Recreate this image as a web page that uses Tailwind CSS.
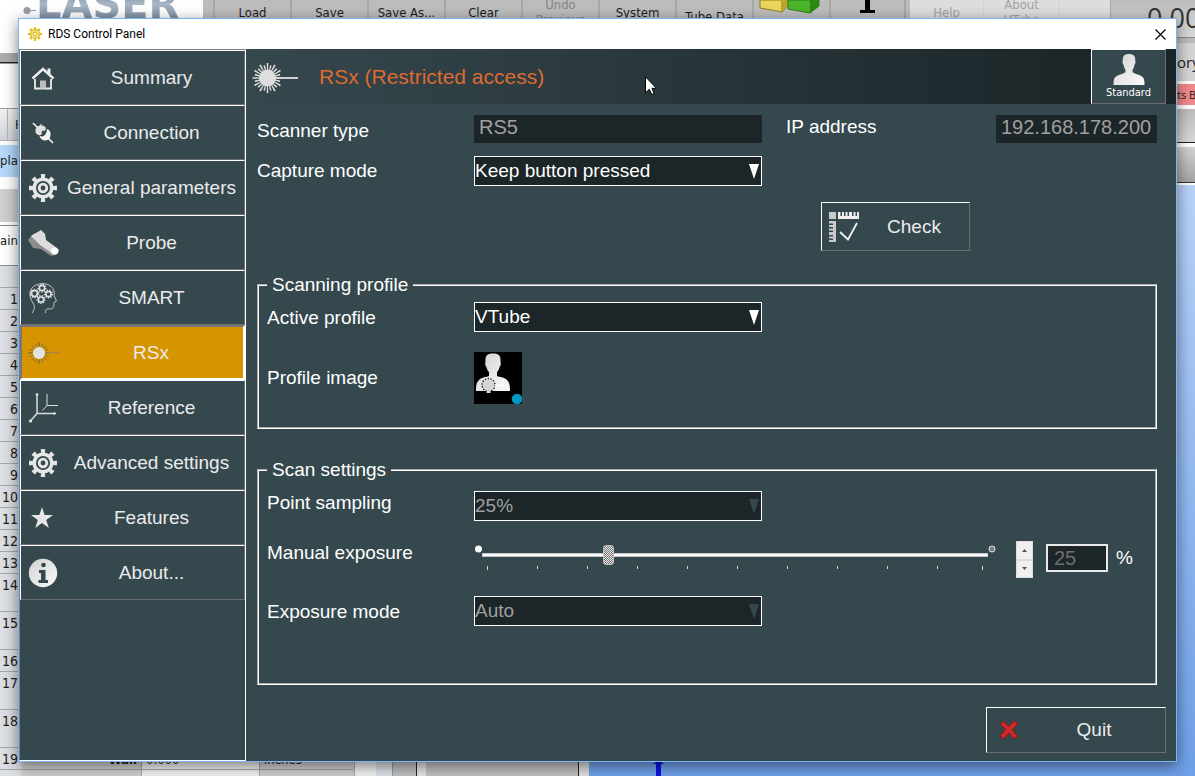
<!DOCTYPE html>
<html lang="en">
<head>
  <meta charset="UTF-8" />
  <meta name="viewport" content="width=device-width, initial-scale=1.0"/>
  <title>RDS Control Panel</title>
  <script src="https://cdn.jsdelivr.net/npm/@tailwindcss/browser@4"></script>
</head>
<body class="relative min-h-screen overflow-hidden bg-white font-['Liberation_Sans',Arial,sans-serif] text-[19px] leading-6 text-white">

  <!-- shared icon shapes -->
  <svg class="absolute w-0 h-0" aria-hidden="true">
    <defs>
      <linearGradient id="silver" x1="0" y1="0" x2="1" y2="1">
        <stop offset="0" stop-color="#d2d2d2"/><stop offset="1" stop-color="#fafafa"/>
      </linearGradient>
      <symbol id="gear" viewBox="0 0 32 32">
        <g fill="none" stroke="#e6e6e6">
          <circle cx="16" cy="16" r="8.800" stroke-width="3.600"/>
          <circle cx="16" cy="16" r="11.800" stroke-width="4.400" pathLength="16" stroke-dasharray="0.9 1.1" stroke-dashoffset="0.45"/>
          <circle cx="16" cy="16" r="3.800" stroke-width="2.800"/>
        </g>
      </symbol>
      <symbol id="person" viewBox="0 0 32 32">
        <path fill="url(#silver)" d="M16 1c4.500 0 6.500 2 6.200 6.500.6 1.500.2 3.500-.8 4.200-.3 2.500-1 3.800-1.800 5v2.600c2 1.600 6 2 9.400 4.200 2.200 1.500 2.500 4 2.500 8.500H.5c0-4.500.3-7 2.500-8.500 3.400-2.200 7.400-2.600 9.400-4.200v-2.600c-.8-1.200-1.500-2.500-1.800-5-1-.7-1.400-2.700-.8-4.200C9.500 3 11.500 1 16 1z"/>
      </symbol>
    </defs>
  </svg>

  <!-- application behind the dialog -->
  <div class="absolute inset-0 flex flex-col overflow-hidden font-['DejaVu_Sans_Condensed','DejaVu_Sans',sans-serif] text-[13px] leading-[15px] text-[#1c1c1c]" aria-hidden="true">
    <div class="flex h-[43px] shrink-0 bg-[#bdbdbd]">
      <div class="flex w-[203px] items-start overflow-hidden bg-white">
        <svg class="w-[36px] h-6 shrink-0" viewBox="0 0 36 24"><path d="M27 10.500h9" stroke="#7f9fd0"/><circle cx="27" cy="10.500" r="3.500" fill="#999ea4"/></svg>
        <div class="-mt-4 bg-linear-to-b from-[#5b6f86] via-[#a9b8c6] to-[#6f8296] bg-clip-text font-['DejaVu_Sans'] text-[40px] leading-[40px] font-bold text-transparent">LASER</div>
      </div>
      <div class="flex h-6 pl-[10px] text-center">
        <div class="flex w-[77px] items-center justify-center border-l-2 border-[#a8a8a8]">Load</div>
        <div class="flex w-[77px] items-center justify-center border-l-2 border-[#a8a8a8]">Save</div>
        <div class="flex w-[77px] items-center justify-center border-l-2 border-[#a8a8a8]">Save As...</div>
        <div class="flex w-[77px] items-center justify-center border-l-2 border-[#a8a8a8]">Clear</div>
        <div class="flex w-[77px] items-center justify-center border-l-2 border-[#a8a8a8] text-[#858585]">Undo<br>Previous</div>
        <div class="flex w-[77px] items-center justify-center border-l-2 border-[#a8a8a8]">System</div>
        <div class="flex w-[77px] items-end justify-center border-l-2 border-[#a8a8a8]">Tube Data</div>
        <div class="w-[77px] border-l-2 border-[#a8a8a8]">
          <svg class="w-[75px] h-4" viewBox="0 0 75 16">
            <path d="M6 0h28v5l-6 7-22-4z" fill="#ecd75c" stroke="#8d7a1a"/><path d="M27 12V0h7v5z" fill="#c2a726"/>
            <path d="M34 0h31v6l-9 7-22-4z" fill="#4bb52b" stroke="#2c7d14"/><path d="M56 13V0h9v6z" fill="#2b8a13"/>
          </svg>
        </div>
        <div class="w-[77px] border-x-2 border-[#a8a8a8]">
          <svg class="w-[73px] h-4" viewBox="0 0 73 16"><path d="M34 0h5v10h5v3H29v-3h5z" fill="#000"/></svg>
        </div>
      </div>
      <div class="ml-[4px] flex w-[201px] border-r border-[#aaa] bg-[#dedede] text-[#a3a3a3]">
        <div class="flex h-6 w-[73px] items-center justify-center">Help</div>
        <div class="flex h-6 w-[77px] items-center justify-center border-x border-[#d2d2d2] text-center">About<br>VTube</div>
      </div>
      <div class="h-[38px] flex-1 overflow-hidden border-b border-[#8a8a8a] bg-linear-to-b from-[#bcbcbc] to-[#dadada] pl-[36px] font-['Open_Sans'] text-[27px] leading-9 whitespace-nowrap text-[#333]">0.000</div>
    </div>

    <div class="flex min-h-0 flex-1">
      <!-- row headers of the data grid -->
      <div class="w-[21px] shrink-0 overflow-hidden">
        <div class="h-[10px] bg-white"></div>
        <div class="h-[10px] border-b border-[#222] bg-[#adadad]"></div>
        <div class="h-[46px] border-y border-[#999] bg-white"></div>
        <div class="flex h-8 items-center border-b border-[#b5b5b5] bg-linear-to-b from-[#f2f2f2] to-[#cfd3d8]"><span class="ml-[7px] border-l border-[#b5b5b5] pl-[7px] leading-8">H</span></div>
        <div class="mt-1 h-8 bg-[#b5d9fb] leading-8">play</div>
        <div class="mt-3 h-[33px] bg-[#d0d0d0]"></div>
        <div class="mt-[3px] h-10 border-t border-[#888] leading-[30px]">ain</div>
        <ol class="border-t border-[#8a8f9c] bg-[#dcdfe4] pt-[21px] text-right text-[14px] leading-[22px]">
          <li class="h-[22px] border-t border-[#a4a8ad] pr-[3px]">1</li>
          <li class="h-[22px] border-t border-[#a4a8ad] pr-[3px]">2</li>
          <li class="h-[22px] border-t border-[#a4a8ad] pr-[3px]">3</li>
          <li class="h-[22px] border-t border-[#a4a8ad] pr-[3px]">4</li>
          <li class="h-[22px] border-t border-[#a4a8ad] pr-[3px]">5</li>
          <li class="h-[22px] border-t border-[#a4a8ad] pr-[3px]">6</li>
          <li class="h-[22px] border-t border-[#a4a8ad] pr-[3px]">7</li>
          <li class="h-[22px] border-t border-[#a4a8ad] pr-[3px]">8</li>
          <li class="h-[22px] border-t border-[#a4a8ad] pr-[3px]">9</li>
          <li class="h-[22px] border-t border-[#a4a8ad] pr-[3px]">10</li>
          <li class="h-[22px] border-t border-[#a4a8ad] pr-[3px]">11</li>
          <li class="h-[22px] border-t border-[#a4a8ad] pr-[3px]">12</li>
          <li class="h-[22px] border-t border-[#a4a8ad] pr-[3px]">13</li>
          <li class="h-[38px] border-t border-[#a4a8ad] pr-[3px]">14</li>
          <li class="h-[38px] border-t border-[#a4a8ad] pr-[3px]">15</li>
          <li class="h-[22px] border-t border-[#a4a8ad] pr-[3px]">16</li>
          <li class="h-[38px] border-t border-[#a4a8ad] pr-[3px]">17</li>
          <li class="h-[38px] border-t border-[#a4a8ad] pr-[3px]">18</li>
          <li class="h-[22px] border-t border-[#a4a8ad] pr-[3px]">19</li>
          <li class="h-[22px] border-t border-[#a4a8ad]"></li>
        </ol>
      </div>
      <div class="flex w-[568px] shrink-0 items-end">
        <div class="flex h-[29px] w-full leading-[25px]">
          <div class="w-[121px] border-r border-[#a9a9a9] bg-[#d0d0d0]"><p class="h-[23px] border-b border-[#a9a9a9] pr-1 text-right font-bold">Wall</p></div>
          <div class="w-[118px] border-r border-[#a9a9a9] bg-[#f4f4f4]"><p class="h-[23px] border-b border-[#a9a9a9] pl-1">0.000</p></div>
          <div class="w-[95px] border-r border-[#a9a9a9] bg-[#d0d0d0]"><p class="h-[23px] border-b border-[#a9a9a9] pl-1">inches</p></div>
          <div class="w-[21px] bg-[#f2f2f2]"></div>
          <div class="w-[17px] border-r border-[#7f9cc0] bg-[#dce1e7]"></div>
          <div class="w-[24px] border-r border-[#222] bg-[#c0c0c0]"></div>
          <div class="w-[9px] bg-[#e4e4e4]"></div>
          <div class="w-[153px] border-r border-[#222] bg-[#c0c0c0]"></div>
          <div class="flex-1 bg-[#dedede]"></div>
        </div>
      </div>
      <div class="flex flex-1 flex-col overflow-hidden whitespace-nowrap">
        <div class="flex h-[38px] justify-end bg-[#d5d5d5]"><span class="w-[18px] font-['Open_Sans'] text-[15px] leading-[38px]">ory</span></div>
        <div class="mt-[3px] flex h-[21px] justify-end bg-[#f08a8a]"><span class="w-[18px] font-['Open_Sans'] text-[11px] leading-[21px]">ts Be</span></div>
        <div class="mt-1 h-[34px] border-b border-[#222] bg-linear-to-b from-[#bcbcbc] to-[#dadada]"></div>
        <div class="mt-1 h-[36px] border-b border-[#333] bg-linear-to-b from-[#d2d2d2] to-[#a4a4a4]"></div>
        <div class="mt-0.5 flex flex-1 items-end bg-linear-to-b from-[#b9d2f8] to-[#6ea0e8]">
          <svg class="ml-16 h-4 w-[12px]" viewBox="0 0 12 16"><path d="M5.500 0L11 4H8v12H3V4H0z" fill="#0b12e8"/></svg>
        </div>
      </div>
    </div>
  </div>

  <!-- dialog -->
  <div class="relative mx-[18px] mt-[18px] border border-[#7ab6f5] bg-[#35484e] shadow-[0_4px_14px_rgba(0,0,0,0.5)]">
    <div class="flex h-[30px] items-center bg-white pl-[9px] font-[Roboto,sans-serif] text-[12px] text-black">
      <svg class="mr-[6px] h-[14px] w-[14px]" viewBox="0 0 14 14" fill="none" stroke="#dfb90c">
        <circle cx="7" cy="7" r="4.300" stroke-width="1.500"/>
        <circle cx="7" cy="7" r="5.800" stroke-width="2.200" pathLength="16" stroke-dasharray="0.9 1.1" stroke-dashoffset="0.45"/>
        <circle cx="7" cy="7" r="2" stroke-width="1.300"/>
      </svg>
      <h1 class="flex-1">RDS Control Panel</h1>
      <button type="button" aria-label="Close" class="flex h-full w-[31px] items-center justify-center">
        <svg class="h-[11px] w-[11px]" viewBox="0 0 11 11" stroke="#000" stroke-width="1.200"><path d="M.5.500l10 10M10.500.500l-10 10"/></svg>
      </button>
    </div>

    <div class="flex">
      <nav class="flex w-[227px] shrink-0 flex-col border border-t-[#808080] border-r-white border-b-white border-l-[#808080] text-[#ebebeb]">
        <button type="button" class="flex h-[55px] items-center border border-t-white border-r-[#6d6d6d] border-b-[#6d6d6d] border-l-white pl-[6px]">
          <svg class="h-8 w-8" viewBox="0 0 32 32"><path d="M5.500 16.500L16 7l10.500 9.500" fill="none" stroke="#ececec" stroke-width="2.500"/><path d="M20.500 6.500h3v6l-3-2.500z" fill="#ececec"/><path d="M8 17v9.500h16V17" fill="none" stroke="#ececec" stroke-width="1.800"/><path d="M13 18.500h6v8h-6z" fill="#bdbdbd"/></svg>
          <span class="flex-1">Summary</span>
        </button>
        <button type="button" class="flex h-[55px] items-center border border-t-white border-r-[#6d6d6d] border-b-[#6d6d6d] border-l-white pl-[6px]">
          <svg class="h-8 w-8" viewBox="0 0 32 32"><path d="M6 6l5 5M20 20l6 6" stroke="#f0f0f0" stroke-width="1.600"/><path d="M8.500 15c-.5-3.500 1.500-6 4.500-6.500l1-2 1 2c2 .2 3.200 1 4 2.500l-1 3-2-.5-1.500 1.500.5 2-2.500 1.500-2-1c-1-.5-1.700-1.300-2-2.500z" fill="#dedede"/><path d="M12.500 19l3 .5 2.500-1.500 1.500-3 .5-3c3 1 4.500 4 3 8.500-1.200 2.500-3 3.200-5.500 3-2.500-.3-4.300-2-5-4.500z" fill="#f2f2f2"/></svg>
          <span class="flex-1">Connection</span>
        </button>
        <button type="button" class="flex h-[55px] items-center border border-t-white border-r-[#6d6d6d] border-b-[#6d6d6d] border-l-white pl-[6px]">
          <svg class="h-8 w-8"><use href="#gear"/></svg>
          <span class="flex-1">General parameters</span>
        </button>
        <button type="button" class="flex h-[55px] items-center border border-t-white border-r-[#6d6d6d] border-b-[#6d6d6d] border-l-white pl-[6px]">
          <svg class="h-8 w-8" viewBox="0 0 32 32"><path d="M1 13l5-6 8-3 4 5 1 5 11 9-2 5-4 1-10-7-8-1z" fill="#8c8c8c"/><path d="M4 9l10-6 4 4 1 6 11 8a3 3 0 0 1-4 6L13 18z" fill="#dcdcdc"/><circle cx="27.500" cy="24" r="3.500" fill="#fff"/></svg>
          <span class="flex-1">Probe</span>
        </button>
        <button type="button" class="flex h-[55px] items-center border border-t-white border-r-[#6d6d6d] border-b-[#6d6d6d] border-l-white pl-[6px]">
          <svg class="h-8 w-8" viewBox="0 0 32 32" fill="none" stroke="#e4e4e4">
            <path stroke-width=".8" d="M5 31c3-4 3-7 1-10C1 14 2 6 9 3c7-3 16-1 18 6 .5 3 0 4 .5 6l2 4-2.500 1.500c0 4-.5 6.500-3.500 6.500-4-.5-5 0-5 4"/>
            <g stroke-width="1.500"><circle cx="15" cy="6" r="2.600"/><circle cx="7.500" cy="11.500" r="2.900"/><circle cx="21.500" cy="12" r="2.600"/><circle cx="14" cy="17.500" r="2.600"/></g>
            <g stroke-width="1.500" stroke-dasharray="1.300 1.300"><circle cx="15" cy="6" r="3.800"/><circle cx="7.500" cy="11.500" r="4.100"/><circle cx="21.500" cy="12" r="3.800"/><circle cx="14" cy="17.500" r="3.800"/></g>
          </svg>
          <span class="flex-1">SMART</span>
        </button>
        <button type="button" aria-current="page" class="flex h-[55px] items-center border-2 border-t-[#77777a] border-r-white border-b-white border-l-[#77777a] bg-[#d69500] pl-[5px]">
          <svg class="h-8 w-8 overflow-visible" viewBox="0 0 32 32" fill="none">
            <path d="M18 15.500h15" stroke="#a8873e" stroke-width="1.500"/>
            <circle cx="12" cy="16" r="8" stroke="#94772e" stroke-width="4" pathLength="32" stroke-dasharray="0.7 1.3" stroke-dashoffset="0.35"/>
            <path d="M12 5v4M12 23v4M1 16h4" stroke="#94772e" stroke-width="1.500"/>
            <circle cx="12" cy="16" r="6" fill="#e2e2e2"/>
          </svg>
          <span class="flex-1">RSx</span>
        </button>
        <button type="button" class="flex h-[55px] items-center border border-t-white border-r-[#6d6d6d] border-b-[#6d6d6d] border-l-white pl-[6px]">
          <svg class="h-8 w-8" viewBox="0 0 32 32" fill="none" stroke="#d9dcdc"><path stroke-width="1.500" d="M10 2v19.500h17M10 21.500l-7 8"/><path d="M20 2v11.500h11M20 13.500l-4.500 5"/><g stroke="none" fill="#e8e8e8"><circle cx="10" cy="2.500" r="1.300"/><circle cx="27.500" cy="21.500" r="1.300"/><circle cx="3.500" cy="29" r="1.600"/></g></svg>
          <span class="flex-1">Reference</span>
        </button>
        <button type="button" class="flex h-[55px] items-center border border-t-white border-r-[#6d6d6d] border-b-[#6d6d6d] border-l-white pl-[6px]">
          <svg class="h-8 w-8"><use href="#gear"/></svg>
          <span class="flex-1">Advanced settings</span>
        </button>
        <button type="button" class="flex h-[55px] items-center border border-t-white border-r-[#6d6d6d] border-b-[#6d6d6d] border-l-white pl-[6px]">
          <svg class="h-8 w-8" viewBox="0 0 32 32"><path d="M15 5l2.600 8H26l-6.800 4.900 2.600 8.100L15 21l-6.800 5 2.600-8.100L4 13h8.400z" fill="#e6e6e6"/></svg>
          <span class="flex-1">Features</span>
        </button>
        <button type="button" class="flex h-[55px] items-center border border-t-white border-r-[#6d6d6d] border-b-[#6d6d6d] border-l-white pl-[6px]">
          <svg class="h-8 w-8" viewBox="0 0 32 32"><circle cx="16" cy="16" r="14.200" fill="url(#silver)"/><circle cx="16.500" cy="8" r="2.300" fill="#35484e"/><path d="M12 13h6.500v10H21v3h-9.500v-3H14v-7h-2z" fill="#35484e"/></svg>
          <span class="flex-1">About...</span>
        </button>
      </nav>

      <div class="min-w-0 flex-1">
        <header class="flex h-[55px] items-center bg-linear-to-r from-[#35484e] to-[#1a2326] pr-[10px] pl-[5px]">
          <svg class="h-8 w-12" viewBox="0 0 48 32" fill="none" stroke="#dedede">
            <path d="M24 17h23" stroke-width="1.800"/>
            <circle cx="16.500" cy="17" r="11" stroke-width="8" pathLength="24" stroke-dasharray="0.460 1.540" stroke-dashoffset="0.230"/>
            <circle cx="16.500" cy="17" r="10" stroke-width="6" pathLength="24" stroke-dasharray="0.500 1.500" stroke-dashoffset="1.250"/>
            <circle cx="16.500" cy="17" r="8" fill="#dedede"/>
          </svg>
          <h2 class="ml-[20px] flex-1 text-[21px] text-[#dd6a30]">RSx (Restricted access)</h2>
          <button type="button" class="flex h-full w-[75px] flex-col items-center border border-t-white border-r-[#6d6d6d] border-b-[#6d6d6d] border-l-white bg-[#35484e] pt-[3px] font-['DejaVu_Sans_Condensed','DejaVu_Sans',sans-serif] text-[11px] leading-[16px]">
            <svg class="h-8 w-8"><use href="#person"/></svg>
            Standard
          </button>
        </header>

        <form class="flex flex-col pt-[11px] pr-[10px] pb-2 pl-[11px]" onsubmit="event.preventDefault()">
          <div class="mr-[9px] grid grid-cols-[217px_288px_1fr_161px] gap-y-[13px]">
            <label for="scanner-type" class="pt-1">Scanner type</label>
            <input id="scanner-type" type="text" value="RS5" readonly class="h-[28px] bg-[#1c2528] px-[5px] pb-1 text-[20px] text-[#a0a0a0]">
            <label for="ip-address" class="pl-6">IP address</label>
            <input id="ip-address" type="text" value="192.168.178.200" readonly class="h-[28px] min-w-0 bg-[#1c2528] px-[5px] pb-1 text-[20px] text-[#a0a0a0]">
            <label for="capture-mode" class="pt-[3px]">Capture mode</label>
            <div class="relative">
              <select id="capture-mode" class="h-[30px] w-full appearance-none border border-white bg-[#1c2528]"><option>Keep button pressed</option></select>
              <svg class="pointer-events-none absolute top-2 right-[3px] h-[15px] w-[10px]" viewBox="0 0 10 15"><path d="M0 0h10L5 15z" fill="#fff"/></svg>
            </div>
          </div>

          <button type="button" class="mt-4 ml-[564px] flex h-[49px] w-[149px] items-center border border-t-white border-r-[#6d6d6d] border-b-[#6d6d6d] border-l-white pl-[7px] text-[#ebebeb]">
            <svg class="h-8 w-[30px]" viewBox="0 0 30 32" fill="#c9c9c9">
              <path d="M0 1h7v7H0z"/><path d="M9 1v7h21V1h-2v4h-1.500V1h-2v4H23V1h-3v4h-1.500V1h-2v4H15V1h-2v4h-1.500V1z" fill="#f0f0f0"/>
              <path d="M0 10h7v21H0v-2h4v-1.500H0v-2h4V24H0v-3h4v-1.500H0v-2h4V16H0v-2h4v-1.500H0z"/>
              <path d="M11 21l8 7.500L28 12" fill="none" stroke="#f0f0f0" stroke-width="1.800"/>
            </svg>
            <span class="flex-1">Check</span>
          </button>

          <fieldset class="mt-[22px] mr-[9px] border-2 border-white pt-[5px] pr-2 pb-[23px] pl-2 [border-style:groove]">
            <legend class="px-[5px]">Scanning profile</legend>
            <div class="grid grid-cols-[207px_288px] gap-y-5">
              <label for="active-profile" class="pt-1">Active profile</label>
              <div class="relative">
                <select id="active-profile" class="h-[30px] w-full appearance-none border border-white bg-[#1c2528]"><option>VTube</option></select>
                <svg class="pointer-events-none absolute top-2 right-[3px] h-[15px] w-[10px]" viewBox="0 0 10 15"><path d="M0 0h10L5 15z" fill="#fff"/></svg>
              </div>
              <span class="self-center">Profile image</span>
              <svg class="h-[52px] w-12" viewBox="0 0 48 52" role="img" aria-label="Profile image">
                <path d="M0 0h48v52H0z" fill="#000"/>
                <path fill="url(#silver)" d="M19 1.500c6 0 8 2.500 7.500 8 .7 2 .2 5-1 5.500-.5 2.500-1.300 4-2.500 5v4c3 1.300 7 .8 10 4 2.500 2.500 3 5 3 11H2c0-6 .5-8.500 3-11 3-3.200 7-2.700 10-4v-4c-1.200-1-2-2.500-2.500-5-1.200-.5-1.700-3.500-1-5.500-.5-5.500 1.500-8 7.500-8z"/>
                <circle cx="14.500" cy="33" r="6.500" fill="#d6d6d6" stroke="#000" stroke-width="1.300" stroke-dasharray="1.200 1.700"/>
                <path d="M21 33.500h9" stroke="#fff" stroke-width="1.500"/><path d="M14.500 39v2" stroke="#ddd" stroke-width="4"/>
                <circle cx="43" cy="47" r="5.300" fill="#0097c0"/>
              </svg>
            </div>
          </fieldset>

          <fieldset class="mt-[29px] mr-[9px] border-2 border-white pt-[9px] pr-2 pb-[57px] pl-2 [border-style:groove]">
            <legend class="px-[5px]">Scan settings</legend>
            <div class="grid grid-cols-[207px_288px_1fr]">
              <label for="point-sampling">Point sampling</label>
              <div class="relative">
                <select id="point-sampling" disabled class="h-[30px] w-full appearance-none border border-white bg-[#1c2528] text-[#a0a0a0] opacity-100"><option>25%</option></select>
                <svg class="pointer-events-none absolute top-2 right-[3px] h-[15px] w-[10px]" viewBox="0 0 10 15"><path d="M0 0h10L5 15z" fill="#35484e"/></svg>
              </div>
            </div>

            <div class="mt-5 flex h-[37px]">
              <label for="exposure" class="w-[207px]">Manual exposure</label>
              <svg class="mt-1 h-2 w-2" viewBox="0 0 8 8"><circle cx="4.500" cy="4" r="3.500" fill="#fff"/></svg>
              <div class="w-[506px] pt-1">
                <input id="exposure" type="range" min="1" max="100" value="25" class="block h-5 w-full appearance-none bg-transparent [&::-webkit-slider-runnable-track]:h-[4px] [&::-webkit-slider-runnable-track]:border [&::-webkit-slider-runnable-track]:border-[#c4c8ca] [&::-webkit-slider-runnable-track]:bg-white [&::-webkit-slider-thumb]:-mt-[9px] [&::-webkit-slider-thumb]:h-5 [&::-webkit-slider-thumb]:w-[11px] [&::-webkit-slider-thumb]:appearance-none [&::-webkit-slider-thumb]:rounded-[3px] [&::-webkit-slider-thumb]:border [&::-webkit-slider-thumb]:border-[#bdbdbd] [&::-webkit-slider-thumb]:bg-[repeating-conic-gradient(#777_0_25%,#e8e8e8_0_50%)] [&::-webkit-slider-thumb]:bg-[length:2px_2px]">
                <svg class="mt-[1px] h-1 w-full" viewBox="0 0 506 4" stroke="#d5d5d5"><path d="M5.500 0v4M55.500 0v3M105.500 0v3M155.500 0v3M205.500 0v3M255.500 0v3M305.500 0v3M355.500 0v3M405.500 0v3M455.500 0v3M500.500 0v4"/></svg>
              </div>
              <svg class="mt-1 h-2 w-2" viewBox="0 0 8 8"><circle cx="4" cy="4" r="3" fill="#77797c" stroke="#e8e8e8"/></svg>
              <div class="ml-5 flex w-[17px] flex-col bg-[#f0f0f0]">
                <button type="button" aria-label="Increase" class="flex flex-1 items-center justify-center border border-[#dcdcdc]"><svg class="h-[3px] w-[5px]" viewBox="0 0 5 3"><path d="M0 3L2.500 0 5 3z" fill="#555"/></svg></button>
                <button type="button" aria-label="Decrease" class="flex flex-1 items-center justify-center border border-[#dcdcdc]"><svg class="h-[3px] w-[5px]" viewBox="0 0 5 3"><path d="M0 0h5L2.500 3z" fill="#555"/></svg></button>
              </div>
              <input type="text" value="25" disabled aria-label="Exposure percent" class="mt-[3px] ml-[13px] h-[28px] w-[62px] border-2 border-[#e8e8e8] bg-[#1c2528] px-[6px] text-[20px] text-[#6e6e6e]">
              <span class="mt-[5px] ml-2">%</span>
            </div>

            <div class="mt-[18px] grid grid-cols-[207px_288px_1fr]">
              <label for="exposure-mode" class="pt-1">Exposure mode</label>
              <div class="relative">
                <select id="exposure-mode" disabled class="h-[30px] w-full appearance-none border border-white bg-[#1c2528] text-[#a0a0a0] opacity-100"><option>Auto</option></select>
                <svg class="pointer-events-none absolute top-2 right-[3px] h-[15px] w-[10px]" viewBox="0 0 10 15"><path d="M0 0h10L5 15z" fill="#35484e"/></svg>
              </div>
            </div>
          </fieldset>

          <button type="button" class="mt-[22px] flex h-[46px] w-[180px] items-center self-end border border-t-white border-r-[#6d6d6d] border-b-[#6d6d6d] border-l-white pl-3 text-[#ebebeb]">
            <svg class="h-5 w-5" viewBox="0 0 20 20"><path d="M4 1l6 5.500L15 1l4 2-5.500 7 5 6.500-3.500 2.500-5-6-5.500 6L1 16l5.500-6.500L1.500 4z" fill="#cf2a2a" stroke="#8d1515" stroke-linejoin="round"/></svg>
            <span class="flex-1 pl-1">Quit</span>
          </button>
        </form>
      </div>
    </div>

    <!-- mouse pointer -->
    <svg class="pointer-events-none absolute top-[57px] left-[626px] h-[19px] w-3" viewBox="0 0 12 19"><path d="M.5.800v16l3.800-3.500 2.500 5.200 2.400-1L7 12.300h4.500z" fill="#fff" stroke="#000"/></svg>
  </div>
</body>
</html>
